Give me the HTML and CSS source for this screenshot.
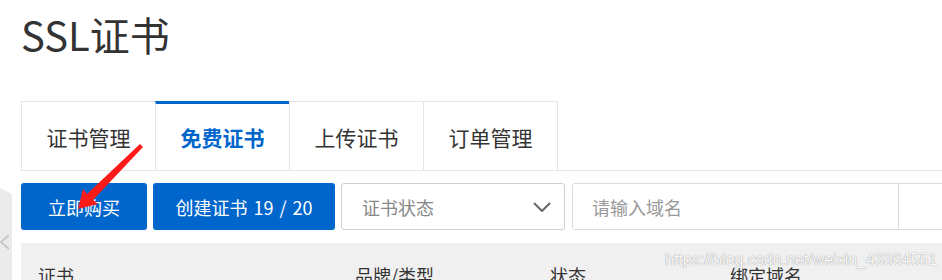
FILE: index.html
```html
<!DOCTYPE html>
<html lang="zh-CN">
    <head>
        <meta charset="UTF-8" />
        <meta name="viewport" content="width=device-width, initial-scale=1.0" />
        <title>SSL证书</title>
        <link rel="stylesheet" href="styles.css">
    </head>
    <body>
        <div class="page">
            <h1 class="title">SSL证书</h1>
            <div class="tabs">
                <div class="tab">证书管理</div>
                <div class="tab active">免费证书</div>
                <div class="tab">上传证书</div>
                <div class="tab">订单管理</div>
            </div>
            <div class="toolbar">
                <a class="btn buy" href="#">立即购买</a>
                <a class="btn create" href="#">创建证书 19 / 20</a>
                <div class="select">
                    <span>证书状态</span>
                    <svg class="arrow" width="18" height="10" viewBox="0 0 18 10">
                        <path d="M1 1 L9 9 L17 1" fill="none" stroke="#666" stroke-width="2" />
                    </svg>
                </div>
                <div class="search">
                    <input type="text" class="text" placeholder="请输入域名" />
                    <div class="search-btn"></div>
                </div>
            </div>
            <div class="thead">
                <span>证书</span>
                <span>品牌/类型</span>
                <span>状态</span>
                <span>绑定域名</span>
            </div>
        </div>

        <!-- 侧边收起按钮 -->
        <div class="handle">
            <svg width="12" height="20" viewBox="0 0 12 20">
                <path d="M11 3 L3 10 L11 17" fill="none" stroke="#c9c9c9" stroke-width="2" />
            </svg>
        </div>

        <!-- 标注箭头 -->
        <svg class="mark" width="942" height="280" viewBox="0 0 942 280">
            <polygon points="140,144 143,147 93,200 98,204 78,209 83,189 87,194" fill="#ff1a1a" />
        </svg>

        <div class="watermark">https://blog.csdn.net/weixin_43364551</div>
    </body>
</html>
```

FILE: styles.css
```css
* {
    margin: 0px;
    padding: 0px;
    box-sizing: border-box;
}
body {
    width: 942px;
    height: 280px;
    overflow: hidden;
    position: relative;
    background-color: white;
    font-family: "Noto Sans CJK SC", "Noto Sans", sans-serif;
    color: #333;
}
.page {
    width: 1000px;
    padding-left: 21px;
    padding-top: 14px;
}
.title {
    font-size: 40px;
    line-height: 40px;
    font-weight: normal;
    color: #333;
}

.tabs {
    display: flex;
    margin-top: 47px;
    border-bottom: 1px solid #e6e6e6;
}
.tab {
    width: 135px;
    height: 69px;
    margin-right: -1px;
    border: 1px solid #e6e6e6;
    border-bottom: none;
    display: flex;
    align-items: center;
    justify-content: center;
    padding-top: 1px;
    font-size: 21px;
    color: #333;
}
.tab.active {
    border-top: 3px solid #0066cc;
    padding-top: 0px;
    color: #0066cc;
    font-weight: bold;
}

.toolbar {
    display: flex;
    gap: 6px;
    margin-top: 12px;
    height: 47px;
}
.btn {
    display: flex;
    align-items: center;
    justify-content: center;
    height: 47px;
    border-radius: 3px;
    background-color: #0066cc;
    color: white;
    text-decoration: none;
    font-size: 18px;
    word-spacing: 2px;
}
.buy {
    width: 126px;
}
.create {
    width: 182px;
}
.select {
    width: 224px;
    height: 47px;
    border: 1px solid #cfcfcf;
    border-radius: 3px;
    display: flex;
    align-items: center;
    justify-content: space-between;
    padding-left: 20px;
    padding-right: 13px;
    font-size: 18px;
    color: #888;
}
.search {
    display: flex;
    height: 47px;
    border: 1px solid #dcdcdc;
    border-radius: 3px;
    margin-left: 1px;
}
.search .text {
    width: 325px;
    height: 45px;
    border: none;
    outline: none;
    padding-left: 19px;
    font-family: "Noto Sans CJK SC", "Noto Sans", sans-serif;
    font-size: 18px;
    color: #333;
}
.search .text::placeholder {
    color: #999;
}
.search-btn {
    width: 80px;
    border-left: 1px solid #dcdcdc;
}

.thead {
    display: grid;
    grid-template-columns: 317px 195px 180px 1fr;
    margin-top: 13px;
    height: 64px;
    padding-left: 17px;
    padding-top: 19px;
    background-color: #f0f0f0;
    font-size: 18px;
    color: #333;
}

.handle {
    position: absolute;
    left: 0;
    top: 188px;
    width: 12px;
    height: 100px;
    background-color: #ebebeb;
    clip-path: polygon(0 0, 100% 6px, 100% 100%, 0 100%);
    display: flex;
    align-items: center;
    padding-top: 8px;
}
.handle svg {
    margin-left: -2px;
}
.mark {
    position: absolute;
    left: 0;
    top: 0;
}
.watermark {
    position: absolute;
    left: 665px;
    top: 252px;
    font-family: "Liberation Sans", Arial, sans-serif;
    font-size: 16px;
    line-height: 16px;
    color: rgba(255, 255, 255, 0.95);
    text-shadow: 0 0 1px #999, 0 0 1px #bbb;
}
```
